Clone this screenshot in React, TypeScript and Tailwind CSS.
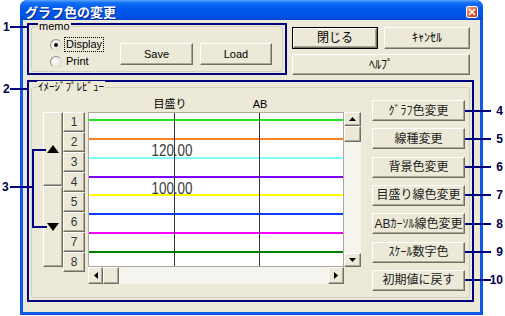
import React from 'react';

// classic 3D button face used all over the dialog
const raised =
  'bg-[#ece9d8] border border-t-white border-l-white border-r-[#716f64] border-b-[#716f64] shadow-[inset_-1px_-1px_0_#aca899]';

const lineColors = ['#1ee61e', '#ff8020', '#80ffff', '#8000ff', '#ffff00', '#0a3cff', '#ff00ff', '#008000'];

const sideButtons = ['ｸﾞﾗﾌ色変更', '線種変更', '背景色変更', '目盛り線色変更', 'ABｶｰｿﾙ線色変更', 'ｽｹｰﾙ数字色', '初期値に戻す'];

function Arrow({ dir, size = 'sm' }: { dir: 'up' | 'down' | 'left' | 'right'; size?: 'sm' | 'lg' }) {
  if (size === 'lg') {
    return (
      <svg width="12" height="8" viewBox="0 0 12 8">
        <polygon points={dir === 'up' ? '6,0 12,8 0,8' : '0,0 12,0 6,8'} fill="#000" />
      </svg>
    );
  }
  const pts = {
    up: '0,4 7,4 3.5,0',
    down: '0,0 7,0 3.5,4',
    left: '4,0 4,7 0,3.5',
    right: '0,0 0,7 4,3.5',
  }[dir];
  const horiz = dir === 'left' || dir === 'right';
  return (
    <svg width={horiz ? 4 : 7} height={horiz ? 7 : 4}>
      <polygon points={pts} fill="#000" />
    </svg>
  );
}

function Chart() {
  return (
    <svg width="254" height="153" className="block">
      {lineColors.map((c, i) => (
        <rect key={c} x="0" y={Math.round(7 + i * 18.85) - 1} width="254" height="2" fill={c} />
      ))}
      <rect x="85" y="0" width="1" height="153" fill="#333" />
      <rect x="170" y="0" width="1" height="153" fill="#333" />
      <text x="62.5" y="43" fontSize="16" textLength="41" lengthAdjust="spacingAndGlyphs" fill="#3c3c3c" fontFamily="Liberation Sans, sans-serif">
        120.00
      </text>
      <text x="62.5" y="81" fontSize="16" textLength="41" lengthAdjust="spacingAndGlyphs" fill="#3c3c3c" fontFamily="Liberation Sans, sans-serif">
        100.00
      </text>
    </svg>
  );
}

function Annotations() {
  const centers = sideButtons.map((_, i) => Math.round(110.5 + i * 28.33));
  return (
    <>
      <svg width="505" height="316" className="pointer-events-none absolute left-0 top-0">
        <g fill="#000080">
          <rect x="10" y="26" width="17" height="2" />
          <rect x="10" y="88" width="17" height="2" />
          <rect x="10" y="186" width="24" height="2" />
          <rect x="32" y="149" width="2" height="79" />
          <rect x="32" y="149" width="14" height="2" />
          <rect x="32" y="226" width="15" height="2" />
          {centers.map((y) => (
            <rect key={y} x="465" y={y - 1} width="26" height="2" />
          ))}
        </g>
      </svg>
      <div className="absolute left-[3px] top-[20px] text-[12px] font-bold leading-[14px] text-[#00004a]">1</div>
      <div className="absolute left-[3px] top-[82px] text-[12px] font-bold leading-[14px] text-[#00004a]">2</div>
      <div className="absolute left-[2px] top-[180px] text-[12px] font-bold leading-[14px] text-[#00004a]">3</div>
      {centers.map((y, i) => (
        <div
          key={y}
          className="absolute right-[2px] text-[12px] font-bold leading-[14px] text-[#00004a]"
          style={{ top: y - 7 }}
        >
          {i + 4}
        </div>
      ))}
    </>
  );
}

export default function App() {
  return (
    <div className="relative h-[316px] w-[505px] overflow-hidden bg-white font-['Liberation_Sans','Noto_Sans_CJK_JP',sans-serif] text-black">
      <div className="ml-[20px] flex h-[315px] w-[463px] flex-col overflow-hidden rounded-t-[7px] bg-[#0b5ae6]">
        {/* Title bar */}
        <div className="flex h-[20px] shrink-0 items-center justify-between bg-[linear-gradient(180deg,#5aa6ff_0%,#1270f5_14%,#0058ee_45%,#0054e6_80%,#0046cf_100%)] pl-[5px] pr-[5px] pt-[4px]">
          <span className="text-[13px] font-bold leading-none text-white [text-shadow:1px_1px_0_#0a2a8a]">グラフ色の変更</span>
          <div className="flex h-[12px] w-[12px] items-center justify-center rounded-[2px] border border-white bg-[linear-gradient(135deg,#f4a382,#dc5a30_55%,#b53a18)]">
            <svg width="8" height="8">
              <path d="M1 1L7 7M7 1L1 7" stroke="#fff" strokeWidth="1.6" />
            </svg>
          </div>
        </div>

        {/* Body */}
        <div className="mx-[3px] mb-[3px] flex flex-1 flex-col bg-[#ece9d8] pl-[4px] pt-[3px]">
          <div className="flex h-[52px] gap-[5px]">
            {/* memo group */}
            <div className="w-[260px] border-2 border-[#000080] px-[2px] py-[1px]">
              <div className="relative flex h-full rounded-[3px] border border-[#d0d0bf]">
                <span className="absolute left-[6px] top-[-7px] bg-[#ece9d8] px-[1px] text-[11px] leading-[12px]">memo</span>
                <div className="ml-[18px] flex w-[70px] flex-col gap-[2px] pt-[10px] text-[11px]">
                  <div className="flex h-[15px] items-center">
                    <span className="flex h-[12px] w-[12px] items-center justify-center rounded-full border border-[#8e8f8f] border-b-[#e0ddd0] border-r-[#e0ddd0] bg-[radial-gradient(circle_at_35%_35%,#fff,#dcd9cc)]">
                      <span className="h-[4px] w-[4px] rounded-full bg-black" />
                    </span>
                    <span className="ml-[2px] border border-dotted border-black px-[1px] leading-[13px]">Display</span>
                  </div>
                  <div className="flex h-[15px] items-center">
                    <span className="h-[12px] w-[12px] rounded-full border border-[#8e8f8f] border-b-[#e0ddd0] border-r-[#e0ddd0] bg-[radial-gradient(circle_at_35%_35%,#fff,#dcd9cc)]" />
                    <span className="ml-[3px] px-[1px] leading-[13px]">Print</span>
                  </div>
                </div>
                <button className={`${raised} mt-[16px] flex h-[22px] w-[73px] items-center justify-center text-[11px]`}>Save</button>
                <button className={`${raised} ml-[7px] mt-[16px] flex h-[22px] w-[72px] items-center justify-center text-[11px]`}>Load</button>
              </div>
            </div>

            {/* dialog buttons */}
            <div className="flex flex-col gap-[5px] pt-[4px] text-[12px]">
              <div className="flex gap-[6px]">
                <button className="flex h-[22px] w-[86px] border border-black">
                  <span className={`${raised} flex flex-1 items-center justify-center`}>閉じる</span>
                </button>
                <button className={`${raised} flex h-[22px] w-[86px] items-center justify-center`}>ｷｬﾝｾﾙ</button>
              </div>
              <button className={`${raised} flex h-[22px] w-[178px] items-center justify-center`}>ﾍﾙﾌﾟ</button>
            </div>
          </div>

          {/* preview group */}
          <div className="mt-[5px] h-[222px] w-[447px] border-2 border-[#000080] px-[2px] pb-[2px] pt-[5px]">
            <div className="relative flex h-full rounded-[3px] border border-[#d0d0bf]">
              <span className="absolute left-[5px] top-[-7px] bg-[#ece9d8] px-[1px] text-[11px] leading-[12px]">ｲﾒｰｼﾞﾌﾟﾚﾋﾞｭｰ</span>

              <div className="ml-[11px] flex flex-col pt-[9px]">
                <div className="flex h-[15px] items-center text-[11px] leading-none">
                  <span className="ml-[97px] w-[60px] text-center">目盛り</span>
                  <span className="ml-[30px] w-[60px] text-center">AB</span>
                </div>
                <div className="flex">
                  <div className="flex h-[155px] w-[20px] flex-col">
                    <div className={`${raised} flex h-[74px] items-center justify-center border-t-[#f6f5ee] border-l-[#f6f5ee]`}>
                      <Arrow dir="up" size="lg" />
                    </div>
                    <div className={`${raised} flex flex-1 items-center justify-center`}>
                      <Arrow dir="down" size="lg" />
                    </div>
                  </div>
                  <div className="flex h-[155px] w-[22px] flex-col text-[12px] text-[#333]">
                    {[1, 2, 3, 4, 5, 6, 7, 8].map((n) => (
                      <div key={n} className={`${raised} flex flex-1 items-center justify-center`}>
                        {n}
                      </div>
                    ))}
                  </div>
                  <div className="ml-[3px] flex flex-col">
                    <div className="flex">
                      <div className="h-[155px] w-[256px] border border-[#aca899] bg-white">
                        <Chart />
                      </div>
                      <div className="flex h-[155px] w-[17px] flex-col bg-[#f5f4ef]">
                        <div className={`${raised} flex h-[14px] items-center justify-center`}>
                          <Arrow dir="up" />
                        </div>
                        <div className={`${raised} h-[16px]`} />
                        <div className="flex-1" />
                        <div className={`${raised} flex h-[14px] items-center justify-center`}>
                          <Arrow dir="down" />
                        </div>
                      </div>
                    </div>
                    <div className="flex h-[17px]">
                      <div className="flex w-[256px] bg-[#f5f4ef]">
                        <div className={`${raised} flex w-[15px] items-center justify-center`}>
                          <Arrow dir="left" />
                        </div>
                        <div className={`${raised} w-[16px]`} />
                        <div className="flex-1" />
                        <div className={`${raised} flex w-[16px] items-center justify-center`}>
                          <Arrow dir="right" />
                        </div>
                      </div>
                    </div>
                  </div>
                </div>
              </div>

              <div className="ml-[11px] flex h-[203px] w-[93px] flex-col justify-between pt-[12px] text-[12px] text-[#222]">
                {sideButtons.map((label) => (
                  <button key={label} className={`${raised} flex h-[21px] items-center justify-center leading-none`}>
                    {label}
                  </button>
                ))}
              </div>
            </div>
          </div>
        </div>
      </div>
      <Annotations />
    </div>
  );
}
